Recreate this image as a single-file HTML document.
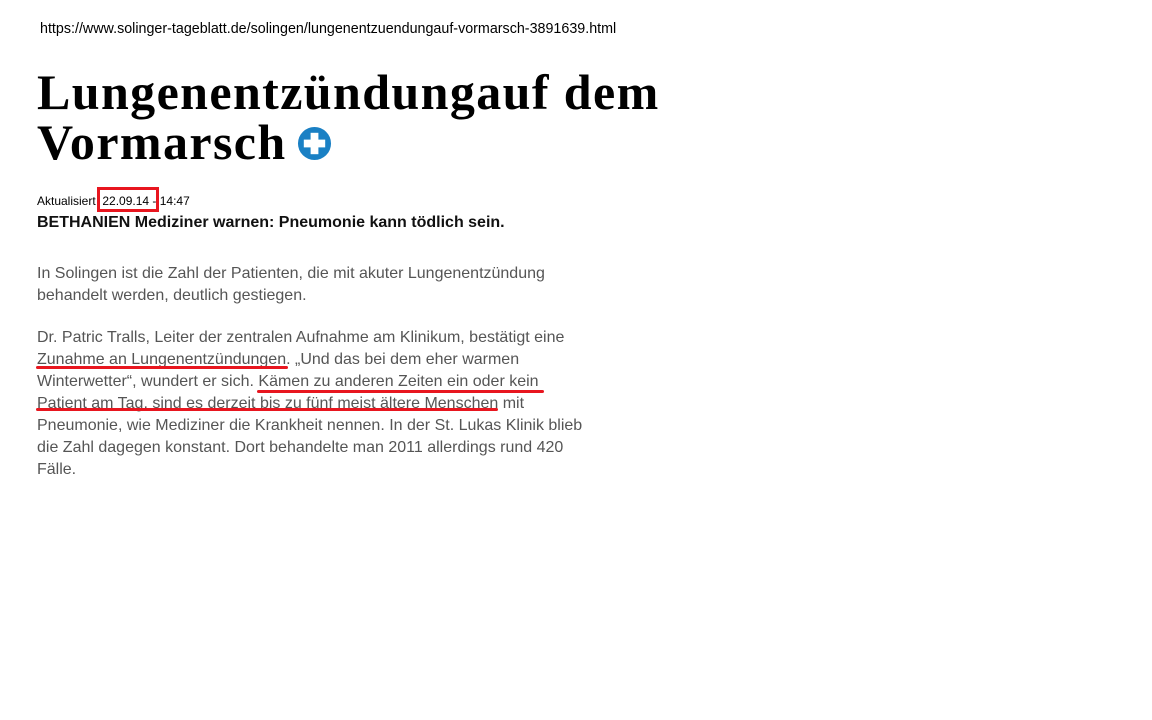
<!DOCTYPE html>
<html><head><meta charset="utf-8"><style>
body{margin:0;width:1152px;height:720px;background:#fff;position:relative;overflow:hidden;font-family:"Liberation Sans",Arial,sans-serif}
.abs{position:absolute;white-space:nowrap}
.url{left:40px;top:21px;font-size:14.3px;color:#000}
h1{position:absolute;left:37px;top:67px;margin:0;font-family:"Liberation Serif",serif;font-weight:bold;font-size:50px;line-height:50px;color:#000;letter-spacing:1.4px;white-space:nowrap}
.plus{display:inline-block;vertical-align:-2px;margin-left:10px}
.meta{left:37px;top:194px;font-size:12px;color:#000}
.lead{left:37px;top:214px;font-size:16px;font-weight:bold;color:#111}
.p{left:37px;font-size:16px;line-height:22px;color:#555;white-space:normal;width:560px}
.red{position:absolute;background:#e8161f;height:3px;border-radius:2px}
.box{position:absolute;left:97px;top:187px;width:56px;height:19px;border:3px solid #e8161f}
</style></head><body>
<div class="abs url">https://www.solinger-tageblatt.de/solingen/lungenentzuendungauf-vormarsch-3891639.html</div>
<h1>Lungenentzündungauf dem<br>Vormarsch<svg class="plus" width="35" height="35" viewBox="0 0 36 36"><circle cx="18" cy="18" r="17" fill="#1a80c4"/><rect x="14" y="7" width="8" height="22" fill="#fff"/><rect x="7" y="14" width="22" height="8" fill="#fff"/></svg></h1>
<div class="abs meta">Aktualisiert &nbsp;22.09.14 - 14:47</div>
<div class="box"></div>
<div class="abs lead">BETHANIEN Mediziner warnen: Pneumonie kann tödlich sein.</div>
<div class="abs p" style="top:263px">In Solingen ist die Zahl der Patienten, die mit akuter Lungenentzündung<br>behandelt werden, deutlich gestiegen.</div>
<div class="abs p" style="top:327px">Dr. Patric Tralls, Leiter der zentralen Aufnahme am Klinikum, bestätigt eine<br>Zunahme an Lungenentzündungen. „Und das bei dem eher warmen<br>Winterwetter“, wundert er sich. Kämen zu anderen Zeiten ein oder kein<br>Patient am Tag, sind es derzeit bis zu fünf meist ältere Menschen mit<br>Pneumonie, wie Mediziner die Krankheit nennen. In der St. Lukas Klinik blieb<br>die Zahl dagegen konstant. Dort behandelte man 2011 allerdings rund 420<br>Fälle.</div>
<div class="red" style="left:36px;top:366px;width:252px"></div>
<div class="red" style="left:257px;top:390px;width:287px"></div>
<div class="red" style="left:36px;top:408px;width:462px"></div>
</body></html>
